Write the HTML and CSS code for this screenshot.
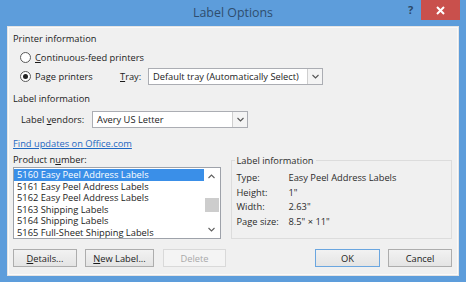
FILE: index.html
```html
<!DOCTYPE html>
<html lang="en">
<head>
    <meta charset="UTF-8">
    <title>Label Options</title>
    <link rel="stylesheet" href="styles.css">
</head>
<body>

    <div class="window">
        <div class="titlebar">
            <div class="title-spacer"></div>
            <div class="title">Label Options</div>
            <div class="title-buttons">
                <span class="help">?</span>
                <span class="close">
                    <svg width="9" height="9" viewBox="0 0 9 9"><path d="M1 1 L8 8 M8 1 L1 8" stroke="#fff" stroke-width="2" fill="none"/></svg>
                </span>
            </div>
        </div>

        <div class="panel">
            <div class="group-title">Printer information</div>

            <div class="radio-row">
                <span class="radio"></span>
                <span><u>C</u>ontinuous-feed printers</span>
            </div>
            <div class="radio-row">
                <div class="radio-item">
                    <span class="radio checked"></span>
                    <span>Pa<u>g</u>e printers</span>
                </div>
                <span class="tray-label"><u>T</u>ray:</span>
                <div class="select tray-select">
                    <span class="select-value">Default tray (Automatically Select)</span>
                    <span class="select-arrow">
                        <svg width="7" height="5" viewBox="0 0 7 5"><path d="M0.5 1 L3.5 4 L6.5 1" stroke="#555" stroke-width="1.1" fill="none"/></svg>
                    </span>
                </div>
            </div>

            <div class="group-title second">Label information</div>

            <div class="vendor-row">
                <span class="vendor-label">Label <u>v</u>endors:</span>
                <div class="select vendor-select">
                    <span class="select-value">Avery US Letter</span>
                    <span class="select-arrow">
                        <svg width="7" height="5" viewBox="0 0 7 5"><path d="M0.5 1 L3.5 4 L6.5 1" stroke="#555" stroke-width="1.1" fill="none"/></svg>
                    </span>
                </div>
            </div>

            <a class="link" href="#">Find updates on Office.com</a>

            <div class="products">
                <div class="product-col">
                    <div class="product-label">Product n<u>u</u>mber:</div>
                    <div class="listbox">
                        <div class="list-items">
                            <div class="list-item selected">5160 Easy Peel Address Labels</div>
                            <div class="list-item">5161 Easy Peel Address Labels</div>
                            <div class="list-item">5162 Easy Peel Address Labels</div>
                            <div class="list-item">5163 Shipping Labels</div>
                            <div class="list-item">5164 Shipping Labels</div>
                            <div class="list-item">5165 Full-Sheet Shipping Labels</div>
                        </div>
                        <div class="scrollbar">
                            <span class="scroll-btn">
                                <svg width="7" height="5" viewBox="0 0 7 5"><path d="M0.5 4 L3.5 1 L6.5 4" stroke="#606060" stroke-width="1.1" fill="none"/></svg>
                            </span>
                            <div class="track"><div class="thumb"></div></div>
                            <span class="scroll-btn">
                                <svg width="7" height="5" viewBox="0 0 7 5"><path d="M0.5 1 L3.5 4 L6.5 1" stroke="#606060" stroke-width="1.1" fill="none"/></svg>
                            </span>
                        </div>
                    </div>
                </div>

                <fieldset class="info-box">
                    <legend>Label information</legend>
                    <div class="info-row"><span class="info-key">Type:</span><span>Easy Peel Address Labels</span></div>
                    <div class="info-row"><span class="info-key">Height:</span><span>1"</span></div>
                    <div class="info-row"><span class="info-key">Width:</span><span>2.63"</span></div>
                    <div class="info-row"><span class="info-key">Page size:</span><span>8.5" &times; 11"</span></div>
                </fieldset>
            </div>

            <div class="buttons">
                <button class="btn details"><u>D</u>etails...</button>
                <button class="btn new-label"><u>N</u>ew Label...</button>
                <button class="btn delete" disabled>Delete</button>
                <div class="spacer"></div>
                <button class="btn ok">OK</button>
                <button class="btn cancel">Cancel</button>
            </div>
        </div>
    </div>

</body>
</html>
```

FILE: styles.css
```css
/* Dialog frame */
body {
    margin: 0;
    padding: 0;
    width: 466px;
    height: 282px;
    overflow: hidden;
    font-family: "Open Sans", "Noto Sans", sans-serif;
    font-size: 9.3px;
    color: #1b1b1b;
}

.window {
    width: 466px;
    height: 282px;
    background-color: #5d9ddb;
    display: flex;
    flex-direction: column;
}

.titlebar {
    height: 26px;
    display: flex;
}

.title-spacer {
    width: 66px;
}

.title {
    flex: 1;
    text-align: center;
    font-size: 12.4px;
    line-height: 26px;
    color: #2f4d6e;
}

.title-buttons {
    width: 60px;
    margin-right: 6px;
    display: flex;
    align-items: flex-start;
}

.help {
    width: 21px;
    text-align: center;
    font-size: 11px;
    font-weight: bold;
    line-height: 20px;
    color: #2c4866;
}

.close {
    width: 39px;
    height: 20px;
    background-color: #c9504c;
    display: flex;
    align-items: center;
    justify-content: center;
}

.panel {
    margin: 0 7px;
    height: 250px;
    background-color: #f0f0f0;
    padding: 4px 7px 0 6px;
    box-sizing: border-box;
    box-shadow: inset 0 0 0 1px #e4e4e4, inset 0 0 0 2px #fafafa;
    display: flex;
    flex-direction: column;
}

.group-title {
    height: 18px;
    line-height: 18px;
}

.group-title.second {
    margin-top: 4px;
}

/* Radio buttons */
.radio-row {
    height: 19px;
    display: flex;
    align-items: center;
    padding-left: 7px;
}

.radio-item {
    width: 100px;
    display: flex;
    align-items: center;
}

.radio {
    width: 11px;
    height: 11px;
    border: 1px solid #5a5a5a;
    border-radius: 50%;
    background-color: #fff;
    box-sizing: border-box;
    margin-right: 4px;
    display: flex;
    align-items: center;
    justify-content: center;
}

.radio.checked::after {
    content: "";
    width: 5px;
    height: 5px;
    border-radius: 50%;
    background-color: #222;
}

.tray-label {
    width: 28px;
}

/* Drop-downs */
.select {
    height: 17px;
    border: 1px solid #abadb3;
    background-color: #fff;
    box-sizing: border-box;
    display: flex;
}

.tray-select {
    width: 175px;
}

.vendor-select {
    width: 156px;
}

.select-value {
    flex: 1;
    padding-left: 4px;
    line-height: 15px;
}

.select-arrow {
    width: 14px;
    border-left: 1px solid #cfcfcf;
    background-color: #f4f4f4;
    display: flex;
    align-items: center;
    justify-content: center;
}

.vendor-row {
    height: 19px;
    margin-top: 2px;
    padding-left: 8px;
    display: flex;
    align-items: center;
}

.vendor-label {
    width: 71px;
}

.link {
    height: 16px;
    line-height: 16px;
    margin-top: 7px;
    color: #1f68c2;
    align-self: flex-start;
}

/* Product list and info */
.products {
    display: flex;
}

.product-col {
    width: 209px;
}

.product-label {
    height: 15px;
    line-height: 15px;
}

.listbox {
    height: 72px;
    border: 1px solid #9ea2aa;
    background-color: #fff;
    box-sizing: border-box;
    display: flex;
}

.list-items {
    flex: 1;
    padding-top: 1px;
}

.list-item {
    height: 11.5px;
    line-height: 11.5px;
    padding-left: 3px;
    white-space: nowrap;
}

.list-item.selected {
    background-color: #3a8fe8;
    color: #fff;
}

.scrollbar {
    width: 16px;
    display: flex;
    flex-direction: column;
}

.scroll-btn {
    height: 17px;
    display: flex;
    align-items: center;
    justify-content: center;
}

.track {
    flex: 1;
}

.thumb {
    margin: 13px 1px 0 1px;
    height: 14px;
    background-color: #cdcdcd;
}

.info-box {
    margin: 2px 0 0 10px;
    padding: 0 5px;
    width: 223px;
    height: 85px;
    box-sizing: border-box;
    border: 1px solid #dcdcdc;
    min-inline-size: 0;
}

.info-box legend {
    padding: 0 2px;
    margin-left: -2px;
    line-height: 13px;
}

.info-box legend,
.info-row {
    color: #2b2b2b;
}

.info-row {
    height: 14.5px;
    line-height: 14.5px;
    display: flex;
}

.info-row:first-of-type {
    margin-top: 4px;
}

.info-key {
    width: 52px;
}

/* Buttons */
.buttons {
    margin-top: 10px;
    height: 18px;
    display: flex;
}

.btn {
    height: 18px;
    padding: 0;
    border: 1px solid #adadad;
    background: linear-gradient(#f2f2f2, #e4e4e4);
    font-family: inherit;
    font-size: 9.3px;
    color: #1b1b1b;
    box-sizing: border-box;
}

.details {
    width: 64px;
}

.new-label {
    width: 69px;
    margin-left: 8px;
}

.delete {
    width: 63px;
    margin-left: 9px;
    background: #f4f4f4;
    border-color: #d9d9d9;
    color: #a9a9a9;
}

.spacer {
    flex: 1;
}

.ok {
    width: 65px;
    border-color: #6aa6e0;
}

.cancel {
    width: 64px;
    margin-left: 8px;
}
```
